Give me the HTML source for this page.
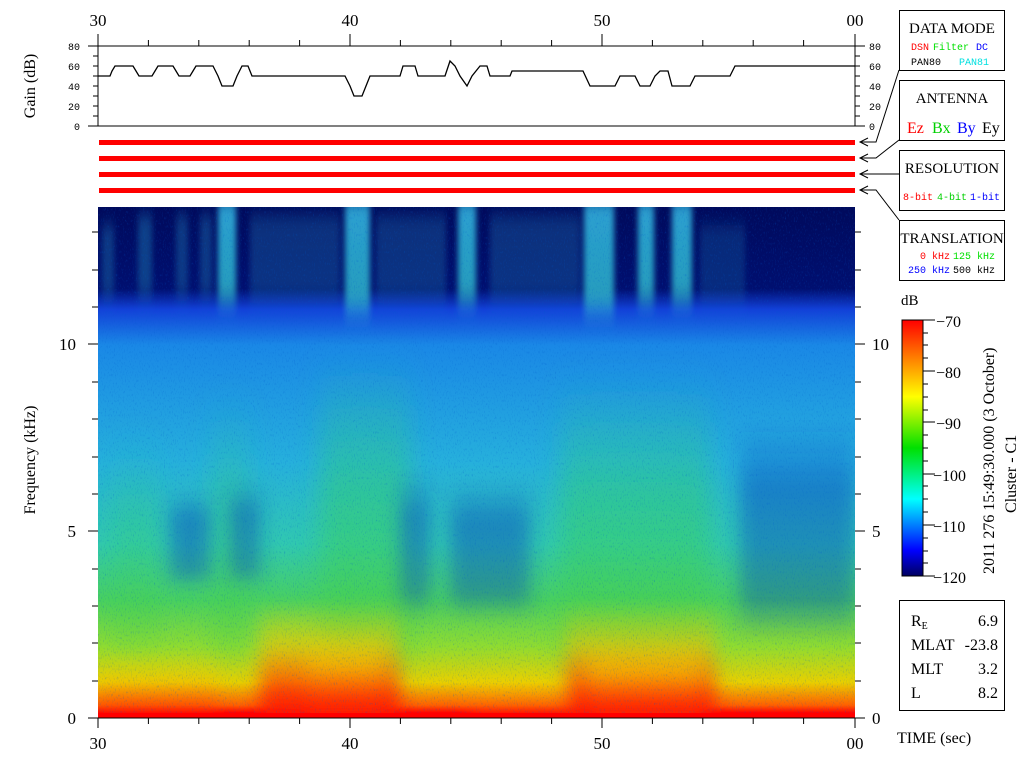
<!DOCTYPE html>
<html><head><meta charset="utf-8"><style>
html,body{margin:0;padding:0;background:#fff;width:1024px;height:768px;overflow:hidden}
svg text{font-family:"Liberation Serif",serif}
.m{font-family:"Liberation Mono",monospace}
</style></head><body>
<svg width="1024" height="768" viewBox="0 0 1024 768" xmlns="http://www.w3.org/2000/svg">
<defs>
<linearGradient id="base" x1="0" y1="0" x2="0" y2="1">
<stop offset="0" stop-color="#000a5c"/>
<stop offset="0.16" stop-color="#000f70"/>
<stop offset="0.2" stop-color="#1240d8"/>
<stop offset="0.27" stop-color="#1a88e6"/>
<stop offset="0.5" stop-color="#26b0dc"/>
<stop offset="0.66" stop-color="#30c8b0"/>
<stop offset="0.77" stop-color="#48d060"/>
<stop offset="0.86" stop-color="#90dc30"/>
<stop offset="0.93" stop-color="#e8d000"/>
<stop offset="0.975" stop-color="#ff6000"/>
<stop offset="0.99" stop-color="#ff0000"/>
</linearGradient>
<linearGradient id="hot" x1="0" y1="0" x2="0" y2="1">
<stop offset="0" stop-color="#f0e000" stop-opacity="0"/>
<stop offset="0.35" stop-color="#f8c000" stop-opacity="0.6"/>
<stop offset="0.7" stop-color="#ff3000" stop-opacity="0.85"/>
<stop offset="1" stop-color="#ff0000" stop-opacity="1"/>
</linearGradient>
<linearGradient id="green" x1="0" y1="0" x2="0" y2="1">
<stop offset="0" stop-color="#30d080" stop-opacity="0"/>
<stop offset="0.4" stop-color="#30d070" stop-opacity="0.5"/>
<stop offset="1" stop-color="#50d040" stop-opacity="0.6"/>
</linearGradient>
<linearGradient id="cold" x1="0" y1="0" x2="0" y2="1">
<stop offset="0" stop-color="#0830c0" stop-opacity="0"/>
<stop offset="0.3" stop-color="#0830c0" stop-opacity="0.4"/>
<stop offset="0.8" stop-color="#0830c0" stop-opacity="0.35"/>
<stop offset="1" stop-color="#0830c0" stop-opacity="0"/>
</linearGradient>
<linearGradient id="stripe" x1="0" y1="0" x2="0" y2="1">
<stop offset="0" stop-color="#30b0e0" stop-opacity="0.9"/>
<stop offset="0.8" stop-color="#30c0d0" stop-opacity="0.8"/>
<stop offset="1" stop-color="#30c0d0" stop-opacity="0"/>
</linearGradient>
<linearGradient id="cb" x1="0" y1="1" x2="0" y2="0">
<stop offset="0" stop-color="#000060"/>
<stop offset="0.1" stop-color="#0000ff"/>
<stop offset="0.3" stop-color="#00ffff"/>
<stop offset="0.5" stop-color="#00e000"/>
<stop offset="0.7" stop-color="#ffff00"/>
<stop offset="0.85" stop-color="#ff8000"/>
<stop offset="1" stop-color="#ff0000"/>
</linearGradient>
<filter id="bl" x="-0.1" y="-0.1" width="1.2" height="1.2"><feGaussianBlur stdDeviation="9 6"/></filter>
<filter id="bl3" x="-0.2" y="-0.2" width="1.4" height="1.4"><feGaussianBlur stdDeviation="12 20"/></filter>
<filter id="bl2" x="-0.1" y="-0.1" width="1.2" height="1.2"><feGaussianBlur stdDeviation="3 8"/></filter>
<filter id="nz" x="0" y="0" width="1" height="1">
<feTurbulence type="fractalNoise" baseFrequency="0.9 0.35" numOctaves="2" seed="3"/>
<feColorMatrix type="matrix" values="0 0 0 0 0  0 0 0 0 0.1  0 0 0 0 0.6  0 0 0 1.6 -0.9"/>
</filter>
<clipPath id="sp"><rect x="98" y="207" width="757" height="511"/></clipPath>
</defs>

<!-- top time axis -->
<g font-size="17" text-anchor="middle">
<text x="98" y="26">30</text><text x="350" y="26">40</text><text x="602" y="26">50</text><text x="855" y="26">00</text>
</g>
<g stroke="#000" stroke-width="1" fill="none">
<line x1="98" y1="34" x2="98" y2="126"/><line x1="855" y1="34" x2="855" y2="126"/>
<line x1="88" y1="46" x2="865" y2="46"/><line x1="88" y1="126" x2="865" y2="126"/>
<path d="M148.4 40V46M198.8 40V46M249.2 40V46M299.6 40V46M350 34V46M400.4 40V46M450.8 40V46M501.2 40V46M551.6 40V46M602 34V46M652.4 40V46M702.8 40V46M753.2 40V46M803.6 40V46"/>
<path d="M93 56H98M93 66H98M93 76H98M93 86H98M93 96H98M93 106H98M93 116H98M855 56H860M855 66H860M855 76H860M855 86H860M855 96H860M855 106H860M855 116H860M855 46H865M855 126H865"/>
<polyline stroke-width="1.3" points="98,76 110,76 112,71 115,66 133,66 136,71 139,76 152,76 155,71 158,66 173,66 176,71 179,76 190,76 193,71 196,66 213,66 218,76 222,86 233,86 237,76 242,66 248,66 252,76 345,76 350,86 354,96 362,96 366,86 370,76 400,76 403,66 415,66 418,76 445,76 450,61 455,66 460,76 467,86 472,76 480,66 487,66 490,76 510,76 512,71 583,71 590,86 615,86 620,76 635,76 640,86 650,86 655,76 660,71 668,71 672,86 690,86 695,76 730,76 735,66 855,66"/>
</g>
<g font-size="10" text-anchor="end">
<text x="80" y="50" class="m">80</text><text x="80" y="70" class="m">60</text><text x="80" y="90" class="m">40</text><text x="80" y="110" class="m">20</text><text x="80" y="130" class="m">0</text>
</g>
<g font-size="10">
<text x="869" y="50" class="m">80</text><text x="869" y="70" class="m">60</text><text x="869" y="90" class="m">40</text><text x="869" y="110" class="m">20</text><text x="869" y="130" class="m">0</text>
</g>
<text transform="translate(35,86) rotate(-90)" font-size="16" text-anchor="middle">Gain (dB)</text>

<!-- red bars -->
<g fill="#ff0000"><rect x="99" y="140" width="756" height="5"/><rect x="99" y="156" width="756" height="5"/><rect x="99" y="172" width="756" height="5"/><rect x="99" y="188" width="756" height="5"/></g>

<!-- arrows -->
<g stroke="#000" fill="none" stroke-width="1">
<path d="M860 142H876L899 70M860 158H876L899 140M860 174H899M860 190H876L899 220"/>
<path d="M868 138L860 142L868 146M868 154L860 158L868 162M868 170L860 174L868 178M868 186L860 190L868 194"/>
</g>

<!-- spectrogram -->
<g clip-path="url(#sp)">
<rect x="98" y="207" width="757" height="511" fill="url(#base)"/>
<g fill="url(#green)" filter="url(#bl3)">
<rect x="320" y="360" width="90" height="300"/>
<rect x="560" y="380" width="150" height="280"/>
<rect x="210" y="400" width="40" height="250" opacity="0.7"/>
<rect x="110" y="440" width="50" height="200" opacity="0.6"/>
</g>
<g fill="url(#cold)" filter="url(#bl)">
<rect x="400" y="470" width="30" height="150"/>
<rect x="450" y="480" width="80" height="140"/>
<rect x="740" y="420" width="115" height="220"/>
<rect x="170" y="490" width="40" height="100"/>
<rect x="230" y="480" width="30" height="110"/>
</g>
<g fill="url(#hot)" filter="url(#bl)">
<rect x="260" y="600" width="140" height="130"/>
<rect x="310" y="630" width="70" height="100"/>
<rect x="565" y="600" width="150" height="130"/>
<rect x="590" y="640" width="110" height="90"/>
<rect x="98" y="650" width="120" height="80" opacity="0.5"/>
<rect x="470" y="670" width="100" height="60" opacity="0.5"/>
</g>
<g fill="url(#stripe)" filter="url(#bl2)">
<rect x="218" y="200" width="18" height="115"/>
<rect x="345" y="200" width="25" height="125"/>
<rect x="458" y="200" width="18" height="115"/>
<rect x="584" y="200" width="30" height="125"/>
<rect x="638" y="200" width="16" height="115"/>
<rect x="672" y="200" width="20" height="115"/>
<rect x="102" y="225" width="12" height="80" opacity="0.3"/>
<rect x="138" y="215" width="14" height="90" opacity="0.35"/>
<rect x="176" y="215" width="12" height="90" opacity="0.3"/>
<rect x="200" y="215" width="12" height="90" opacity="0.3"/>
<rect x="250" y="215" width="90" height="95" opacity="0.25"/>
<rect x="376" y="215" width="70" height="95" opacity="0.25"/>
<rect x="490" y="215" width="90" height="95" opacity="0.25"/>
<rect x="700" y="225" width="45" height="85" opacity="0.2"/>
</g>
<rect x="98" y="207" width="757" height="511" filter="url(#nz)" opacity="0.6"/>
<rect x="98" y="713" width="757" height="5" fill="#ff0000"/>
</g>

<!-- spectrogram axes -->
<g stroke="#000" fill="none">
<line x1="98" y1="718" x2="855" y2="718"/>
<line x1="98" y1="718" x2="98" y2="728"/><line x1="855" y1="718" x2="855" y2="728"/>
<path d="M148.4 718V724M198.8 718V724M249.2 718V724M299.6 718V724M350 718V728M400.4 718V724M450.8 718V724M501.2 718V724M551.6 718V724M602 718V728M652.4 718V724M702.8 718V724M753.2 718V724M803.6 718V724"/>
<path d="M88 718H98M88 531H98M88 344H98M92 681H98M92 643H98M92 606H98M92 569H98M92 494H98M92 457H98M92 419H98M92 382H98M92 307H98M92 270H98M92 232H98"/>
<path d="M855 718H865M855 531H865M855 344H865M855 681H861M855 643H861M855 606H861M855 569H861M855 494H861M855 457H861M855 419H861M855 382H861M855 307H861M855 270H861M855 232H861"/>
</g>
<g font-size="17" text-anchor="middle">
<text x="98" y="749">30</text><text x="350" y="749">40</text><text x="602" y="749">50</text><text x="855" y="749">00</text>
</g>
<g font-size="17" text-anchor="end"><text x="76" y="724">0</text><text x="76" y="537">5</text><text x="76" y="350">10</text></g>
<g font-size="17"><text x="872" y="724">0</text><text x="872" y="537">5</text><text x="872" y="350">10</text></g>
<text transform="translate(35,460) rotate(-90)" font-size="16" text-anchor="middle">Frequency (kHz)</text>
<text x="897" y="743" font-size="16">TIME (sec)</text>

<!-- boxes -->
<g fill="#fff" stroke="#000"><rect x="899.5" y="10.5" width="105" height="60"/><rect x="899.5" y="80.5" width="105" height="60"/><rect x="899.5" y="150.5" width="105" height="60"/><rect x="899.5" y="220.5" width="105" height="60"/><rect x="899.5" y="600.5" width="105" height="110"/></g>
<g font-size="15" text-anchor="middle">
<text x="952" y="33">DATA MODE</text><text x="952" y="103">ANTENNA</text><text x="952" y="173">RESOLUTION</text><text x="952" y="243">TRANSLATION</text>
</g>
<g font-size="10">
<text x="911" y="50" fill="#ff0000" class="m">DSN</text><text x="933" y="50" fill="#00e000" class="m">Filter</text><text x="976" y="50" fill="#0000ff" class="m">DC</text>
<text x="911" y="65" fill="#000" class="m">PAN80</text><text x="959" y="65" fill="#00e0e0" class="m">PAN81</text>
<text x="903" y="200" fill="#ff0000" class="m">8-bit</text><text x="937" y="200" fill="#00d000" class="m">4-bit</text><text x="970" y="200" fill="#0000ff" class="m">1-bit</text>
<text x="920" y="259" fill="#ff0000" class="m">0 kHz</text><text x="953" y="259" fill="#00e000" class="m">125 kHz</text>
<text x="908" y="273" fill="#0000ff" class="m">250 kHz</text><text x="953" y="273" fill="#000" class="m">500 kHz</text>
</g>
<g font-size="16">
<text x="907" y="133" fill="#ff0000">Ez</text><text x="932" y="133" fill="#00d000">Bx</text><text x="957" y="133" fill="#0000ff">By</text><text x="982" y="133" fill="#000">Ey</text>
</g>

<!-- colorbar -->
<text x="901" y="305" font-size="15">dB</text>
<rect x="902" y="320" width="21" height="256" fill="url(#cb)" stroke="#000"/>
<g stroke="#000"><path d="M923 320H935M923 371H935M923 422H935M923 474H935M923 525H935M923 576H935M923 333H928M923 345H928M923 358H928M923 384H928M923 397H928M923 410H928M923 435H928M923 448H928M923 461H928M923 486H928M923 499H928M923 512H928M923 538H928M923 551H928M923 563H928"/></g>
<g font-size="16"><text x="936" y="327">−70</text><text x="936" y="378">−80</text><text x="936" y="429">−90</text><text x="933" y="481">−100</text><text x="933" y="532">−110</text><text x="933" y="583">−120</text></g>
<text transform="translate(994,574) rotate(-90)" font-size="16">2011 276 15:49:30.000 (3 October)</text>
<text transform="translate(1016,513) rotate(-90)" font-size="16">Cluster - C1</text>

<!-- RE box -->
<g font-size="16">
<text x="911" y="626">R<tspan font-size="10" dy="3">E</tspan></text><text x="998" y="626" text-anchor="end">6.9</text>
<text x="911" y="650">MLAT</text><text x="998" y="650" text-anchor="end">-23.8</text>
<text x="911" y="674">MLT</text><text x="998" y="674" text-anchor="end">3.2</text>
<text x="911" y="698">L</text><text x="998" y="698" text-anchor="end">8.2</text>
</g>
</svg>
</body></html>
